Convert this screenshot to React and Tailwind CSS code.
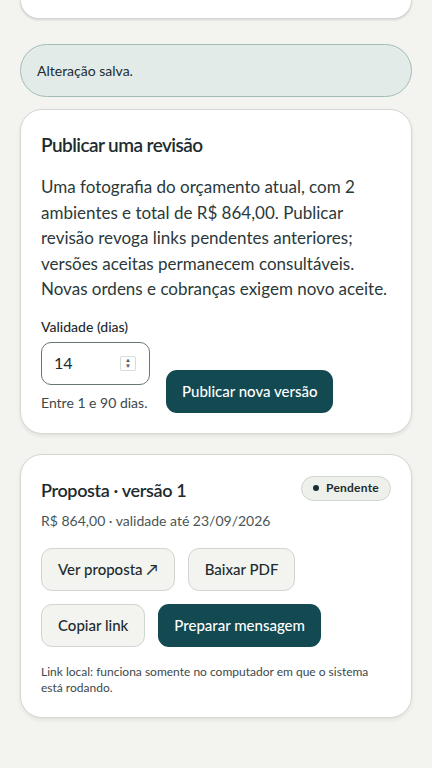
import React from 'react';

const font = { fontFamily: 'Lato, "Noto Sans", sans-serif' };

const GhostButton = ({ children }) => (
  <button className="h-[43px] px-4 rounded-[11px] border border-[#cfd5d0] bg-[#f3f4ef] text-[15px] font-medium text-[#1d2b2e]">
    {children}
  </button>
);

const DarkButton = ({ children }) => (
  <button className="h-[43px] px-4 rounded-[11px] bg-[#134a52] text-[15px] font-medium text-white">
    {children}
  </button>
);

export default function App() {
  return (
    <div style={font} className="min-h-screen bg-[#f3f4ef] px-5 pb-12 text-[#1d2b2e]">
      <div className="h-[19px] rounded-b-[22px] border border-t-0 border-[#d3d8d3] bg-white shadow-sm"></div>

      <div className="mt-[25px] flex h-[53px] items-center rounded-[27px] border border-[#a3bcb8] bg-[#e2ebe8] px-4 text-[14px] text-[#1d2b2e]">
        Alteração salva.
      </div>

      <div className="mt-[12px] rounded-[22px] border border-[#d3d8d3] bg-white px-5 pt-[22px] pb-[20px] shadow-[0_2px_4px_rgba(0,0,0,0.08)]">
        <h2 className="text-[19px] font-semibold leading-[26px] tracking-[-0.03em]">Publicar uma revisão</h2>
        <p className="mt-[16px] text-[17px] leading-[25.5px] text-[#2b393b]">
          Uma fotografia do orçamento atual, com 2 ambientes e total de R$ 864,00. Publicar revisão revoga links pendentes anteriores; versões aceitas permanecem consultáveis. Novas ordens e cobranças exigem novo aceite.
        </p>
        <div className="mt-[15px] flex items-end gap-4">
          <div>
            <label className="block text-[14px] font-medium leading-[20px]">Validade (dias)</label>
            <div className="mt-[5px] flex h-[43px] w-[109px] items-center justify-between rounded-[10px] border border-[#6b7575] pl-[12px] pr-[13px]">
              <span className="text-[16px]">14</span>
              <span className="flex h-[15px] w-[16px] flex-col items-center justify-center rounded-[2px] border border-[#d8dcd8] text-[6px] leading-[6px] text-[#555]">
                <span>▲</span>
                <span>▼</span>
              </span>
            </div>
            <div className="mt-[8px] text-[14px] leading-[20px] text-[#3d4849]">Entre 1 e 90 dias.</div>
          </div>
          <DarkButton>Publicar nova versão</DarkButton>
        </div>
      </div>

      <div className="mt-[20px] rounded-[22px] border border-[#d3d8d3] bg-white px-5 pt-[21px] pb-[21px] shadow-[0_2px_4px_rgba(0,0,0,0.08)]">
        <div className="flex items-start justify-between">
          <h2 className="mt-[1px] text-[18px] font-semibold leading-[26px] tracking-[-0.02em]">Proposta · versão 1</h2>
          <span className="flex h-[25px] items-center gap-[7px] rounded-full border border-[#cfd5d0] bg-[#eef0ec] px-[11px] text-[12px] font-bold tracking-[0.02em] text-[#1d2b2e]">
            <span className="h-[6px] w-[6px] rounded-full bg-[#1d2b2e]"></span>
            Pendente
          </span>
        </div>
        <div className="mt-[8px] text-[14px] leading-[20px] text-[#4a5556]">R$ 864,00 · validade até 23/09/2026</div>
        <div className="mt-[17px] flex flex-wrap gap-[13px]">
          <GhostButton>Ver proposta ↗</GhostButton>
          <GhostButton>Baixar PDF</GhostButton>
        </div>
        <div className="mt-[13px] flex flex-wrap gap-[13px]">
          <GhostButton>Copiar link</GhostButton>
          <DarkButton>Preparar mensagem</DarkButton>
        </div>
        <p className="mt-[17px] text-[12px] leading-[16px] text-[#3d4849]">
          Link local: funciona somente no computador em que o sistema está rodando.
        </p>
      </div>
    </div>
  );
}
